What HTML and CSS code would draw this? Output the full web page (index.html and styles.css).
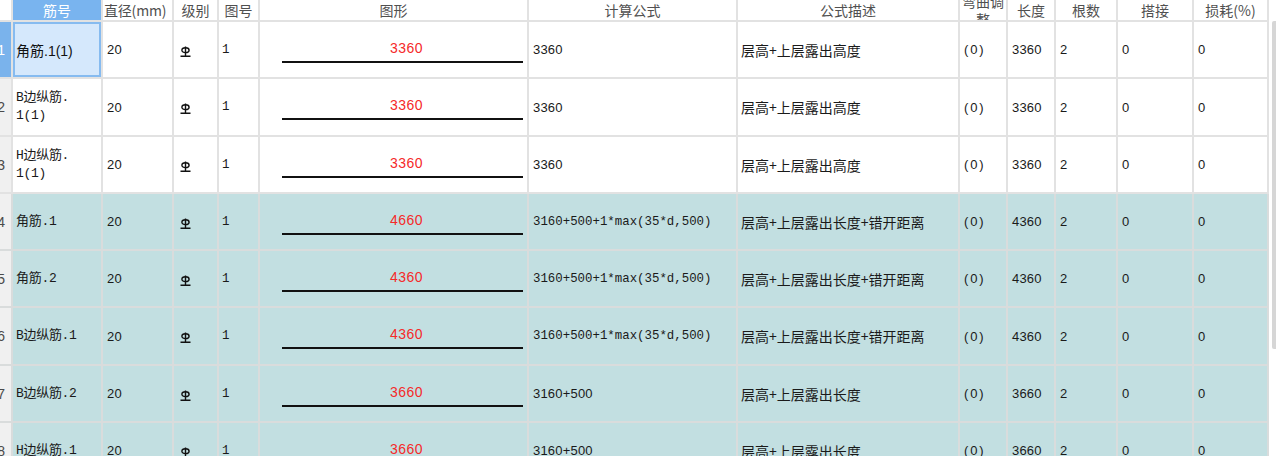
FILE: index.html
```html
<!DOCTYPE html>
<html lang="zh">
<head>
<meta charset="utf-8">
<link rel="stylesheet" href="styles.css">
</head>
<body>
<div class="page">
  <div class="table">
    <div class="row head">
      <div class="c rn corner"></div>
      <div class="c h sel-h">筋号</div>
      <div class="c h left">直径(mm)</div>
      <div class="c h">级别</div>
      <div class="c h">图号</div>
      <div class="c h">图形</div>
      <div class="c h">计算公式</div>
      <div class="c h">公式描述</div>
      <div class="c h wrap">弯曲调整</div>
      <div class="c h">长度</div>
      <div class="c h">根数</div>
      <div class="c h">搭接</div>
      <div class="c h">损耗(%)</div>
    </div>

    <div class="row r57">
      <div class="c rn rn-sel"><span>1</span></div>
      <div class="c cur">角筋.1(1)</div>
      <div class="c num">20</div>
      <div class="c grade"><svg width="11" height="11" viewBox="0 0 11 11"><ellipse cx="5.5" cy="4.2" rx="3.6" ry="2.4" fill="none" stroke="#111" stroke-width="1.4"/><path d="M5.5 0.5V9.5M0.5 10.2H10.5" stroke="#111" stroke-width="1.4"/></svg></div>
      <div class="c mono">1</div>
      <div class="c shape"><div class="fig"><span class="val">3360</span><span class="bar"></span></div></div>
      <div class="c num">3360</div>
      <div class="c desc">层高+上层露出高度</div>
      <div class="c paren">(0)</div>
      <div class="c num">3360</div>
      <div class="c num">2</div>
      <div class="c num">0</div>
      <div class="c num">0</div>
    </div>

    <div class="row r58">
      <div class="c rn"><span>2</span></div>
      <div class="c name">B边纵筋.<br>1(1)</div>
      <div class="c num">20</div>
      <div class="c grade"><svg width="11" height="11" viewBox="0 0 11 11"><ellipse cx="5.5" cy="4.2" rx="3.6" ry="2.4" fill="none" stroke="#111" stroke-width="1.4"/><path d="M5.5 0.5V9.5M0.5 10.2H10.5" stroke="#111" stroke-width="1.4"/></svg></div>
      <div class="c mono">1</div>
      <div class="c shape"><div class="fig"><span class="val">3360</span><span class="bar"></span></div></div>
      <div class="c num">3360</div>
      <div class="c desc">层高+上层露出高度</div>
      <div class="c paren">(0)</div>
      <div class="c num">3360</div>
      <div class="c num">2</div>
      <div class="c num">0</div>
      <div class="c num">0</div>
    </div>

    <div class="row r57">
      <div class="c rn"><span>3</span></div>
      <div class="c name">H边纵筋.<br>1(1)</div>
      <div class="c num">20</div>
      <div class="c grade"><svg width="11" height="11" viewBox="0 0 11 11"><ellipse cx="5.5" cy="4.2" rx="3.6" ry="2.4" fill="none" stroke="#111" stroke-width="1.4"/><path d="M5.5 0.5V9.5M0.5 10.2H10.5" stroke="#111" stroke-width="1.4"/></svg></div>
      <div class="c mono">1</div>
      <div class="c shape"><div class="fig"><span class="val">3360</span><span class="bar"></span></div></div>
      <div class="c num">3360</div>
      <div class="c desc">层高+上层露出高度</div>
      <div class="c paren">(0)</div>
      <div class="c num">3360</div>
      <div class="c num">2</div>
      <div class="c num">0</div>
      <div class="c num">0</div>
    </div>

    <div class="row r57 teal">
      <div class="c rn"><span>4</span></div>
      <div class="c name">角筋.1</div>
      <div class="c num">20</div>
      <div class="c grade"><svg width="11" height="11" viewBox="0 0 11 11"><ellipse cx="5.5" cy="4.2" rx="3.6" ry="2.4" fill="none" stroke="#111" stroke-width="1.4"/><path d="M5.5 0.5V9.5M0.5 10.2H10.5" stroke="#111" stroke-width="1.4"/></svg></div>
      <div class="c mono">1</div>
      <div class="c shape"><div class="fig"><span class="val">4660</span><span class="bar"></span></div></div>
      <div class="c formula">3160+500+1*max(35*d,500)</div>
      <div class="c desc">层高+上层露出长度+错开距离</div>
      <div class="c paren">(0)</div>
      <div class="c num">4360</div>
      <div class="c num">2</div>
      <div class="c num">0</div>
      <div class="c num">0</div>
    </div>

    <div class="row r57 teal">
      <div class="c rn"><span>5</span></div>
      <div class="c name">角筋.2</div>
      <div class="c num">20</div>
      <div class="c grade"><svg width="11" height="11" viewBox="0 0 11 11"><ellipse cx="5.5" cy="4.2" rx="3.6" ry="2.4" fill="none" stroke="#111" stroke-width="1.4"/><path d="M5.5 0.5V9.5M0.5 10.2H10.5" stroke="#111" stroke-width="1.4"/></svg></div>
      <div class="c mono">1</div>
      <div class="c shape"><div class="fig"><span class="val">4360</span><span class="bar"></span></div></div>
      <div class="c formula">3160+500+1*max(35*d,500)</div>
      <div class="c desc">层高+上层露出长度+错开距离</div>
      <div class="c paren">(0)</div>
      <div class="c num">4360</div>
      <div class="c num">2</div>
      <div class="c num">0</div>
      <div class="c num">0</div>
    </div>

    <div class="row r58 teal">
      <div class="c rn"><span>6</span></div>
      <div class="c name">B边纵筋.1</div>
      <div class="c num">20</div>
      <div class="c grade"><svg width="11" height="11" viewBox="0 0 11 11"><ellipse cx="5.5" cy="4.2" rx="3.6" ry="2.4" fill="none" stroke="#111" stroke-width="1.4"/><path d="M5.5 0.5V9.5M0.5 10.2H10.5" stroke="#111" stroke-width="1.4"/></svg></div>
      <div class="c mono">1</div>
      <div class="c shape"><div class="fig"><span class="val">4360</span><span class="bar"></span></div></div>
      <div class="c formula">3160+500+1*max(35*d,500)</div>
      <div class="c desc">层高+上层露出长度+错开距离</div>
      <div class="c paren">(0)</div>
      <div class="c num">4360</div>
      <div class="c num">2</div>
      <div class="c num">0</div>
      <div class="c num">0</div>
    </div>

    <div class="row r57 teal">
      <div class="c rn"><span>7</span></div>
      <div class="c name">B边纵筋.2</div>
      <div class="c num">20</div>
      <div class="c grade"><svg width="11" height="11" viewBox="0 0 11 11"><ellipse cx="5.5" cy="4.2" rx="3.6" ry="2.4" fill="none" stroke="#111" stroke-width="1.4"/><path d="M5.5 0.5V9.5M0.5 10.2H10.5" stroke="#111" stroke-width="1.4"/></svg></div>
      <div class="c mono">1</div>
      <div class="c shape"><div class="fig"><span class="val">3660</span><span class="bar"></span></div></div>
      <div class="c num">3160+500</div>
      <div class="c desc">层高+上层露出长度</div>
      <div class="c paren">(0)</div>
      <div class="c num">3660</div>
      <div class="c num">2</div>
      <div class="c num">0</div>
      <div class="c num">0</div>
    </div>

    <div class="row r57 teal">
      <div class="c rn"><span>8</span></div>
      <div class="c name">H边纵筋.1</div>
      <div class="c num">20</div>
      <div class="c grade"><svg width="11" height="11" viewBox="0 0 11 11"><ellipse cx="5.5" cy="4.2" rx="3.6" ry="2.4" fill="none" stroke="#111" stroke-width="1.4"/><path d="M5.5 0.5V9.5M0.5 10.2H10.5" stroke="#111" stroke-width="1.4"/></svg></div>
      <div class="c mono">1</div>
      <div class="c shape"><div class="fig"><span class="val">3660</span><span class="bar"></span></div></div>
      <div class="c num">3160+500</div>
      <div class="c desc">层高+上层露出长度</div>
      <div class="c paren">(0)</div>
      <div class="c num">3660</div>
      <div class="c num">2</div>
      <div class="c num">0</div>
      <div class="c num">0</div>
    </div>
  </div>
  <div class="scroll"><div class="thumb"></div></div>
</div>
</body>
</html>
```

FILE: styles.css
```css
html, body {
  margin: 0;
  padding: 0;
  background: #ffffff;
}
body {
  width: 1276px;
  height: 456px;
  overflow: hidden;
  font-family: "Liberation Sans", "Noto Sans CJK SC", sans-serif;
  color: #1a1a1a;
}
.page {
  display: flex;
  align-items: flex-start;
}
.table {
  width: 1269px;
  flex: none;
}
.row {
  display: grid;
  grid-template-columns: 13px 90px 71px 45px 41px 269px 209px 222px 48px 48px 62px 76px 75px;
}
.row.head { height: 22px; }
.row.r57 { height: 57px; }
.row.r58 { height: 58px; }
.row.teal .c { background: #c2dfe1; }
.row.teal .c.rn { background: #f0f0f0; }

.c {
  box-sizing: border-box;
  border-right: 2px solid #e2e2e2;
  border-bottom: 2px solid #e2e2e2;
  display: flex;
  align-items: center;
  padding-left: 4px;
  overflow: hidden;
  white-space: nowrap;
  font-size: 13px;
}
.row.teal .c { border-color: #d9dcdc; }

.rn {
  padding: 0 6px 0 0;
  justify-content: flex-end;
  background: #f0f0f0;
  color: #4a4a4a;
  font-size: 14px;
}
.rn.corner { background: #ffffff; }
.rn.rn-sel { background: #7ab3ec; color: #ffffff; }

.h {
  justify-content: center;
  padding: 0;
  font-family: "Noto Sans CJK SC", sans-serif;
  font-size: 14px;
  color: #505050;
  line-height: 18px;
}
.h.left { justify-content: flex-start; padding-left: 1px; letter-spacing: -0.2px; }
.h.sel-h { background: #79b4ef; color: #ffffff; }
.h.wrap {
  white-space: normal;
  text-align: center;
  word-break: break-all;
  padding: 0 2px;
}

.cur {
  background: #d5e8fc;
  box-shadow: inset 0 0 0 2px #86bbf0;
  font-family: "Liberation Sans", "Noto Sans CJK SC", sans-serif;
  font-size: 14px;
  padding-left: 3px;
  color: #111;
}
.name {
  font-family: "Liberation Mono", "Noto Sans CJK SC", monospace;
  font-size: 13px;
  line-height: 18px;
  white-space: normal;
  padding-left: 3px;
  letter-spacing: -0.3px;
}
.num {
  font-family: "Liberation Sans", sans-serif;
  font-size: 13px;
  letter-spacing: 0.2px;
}
.mono {
  font-family: "Liberation Mono", monospace;
  font-size: 12.5px;
  padding-left: 3px;
}
.paren {
  font-family: "Liberation Sans", sans-serif;
  font-size: 13px;
  letter-spacing: 1.8px;
  padding-left: 4px;
}
.grade { padding-left: 6px; padding-top: 3px; }
.formula {
  font-family: "Liberation Mono", monospace;
  font-size: 12.4px;
  padding-left: 4px;
  letter-spacing: 0;
}
.desc {
  font-family: "Noto Sans CJK SC", sans-serif;
  font-size: 14px;
  padding-left: 3px;
}

.shape {
  padding: 0;
  align-items: flex-start;
}
.fig {
  margin: 17px 0 0 22px;
  width: 241px;
  display: flex;
  flex-direction: column;
  align-items: center;
}
.val {
  font-family: "Liberation Sans", sans-serif;
  font-size: 14px;
  color: #f52a2a;
  line-height: 18px;
  margin-left: 8px;
  letter-spacing: 0.5px;
}
.bar {
  display: block;
  width: 241px;
  height: 2px;
  margin-top: 4px;
  background: #111111;
}

.scroll {
  width: 7px;
  flex: none;
  padding-top: 21px;
  display: flex;
  justify-content: flex-end;
}
.thumb {
  width: 4px;
  height: 328px;
  background: #d6d6d6;
  border-radius: 2px 0 0 2px;
}
```
